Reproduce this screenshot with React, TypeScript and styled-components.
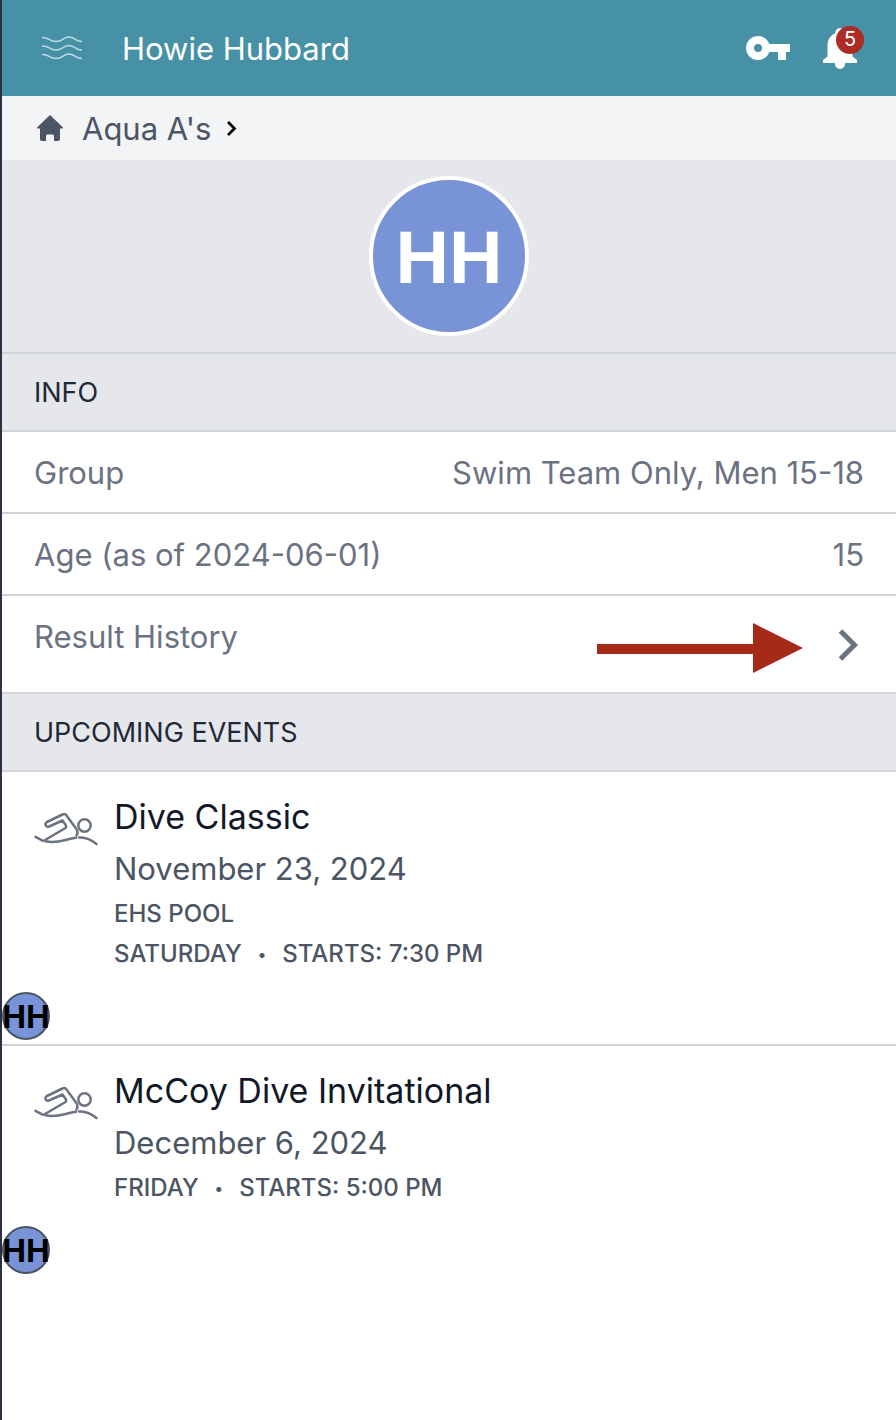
import React from "react";
import styled, { createGlobalStyle } from "styled-components";

const GlobalStyle = createGlobalStyle`
  *, *::before, *::after { box-sizing: border-box; }
  html, body { height: 100%; }
  body { margin: 0; background: #fff; font-family: Inter, "Liberation Sans", sans-serif; }
  h1, h2, h3, p, ul, dl, dt, dd, ol { margin: 0; padding: 0; font-weight: 400; }
  ul, ol { list-style: none; }
  a { color: inherit; text-decoration: none; }
  button { padding: 0; border: 0; background: none; color: inherit; font: inherit; cursor: pointer; }
  svg { display: block; flex: none; }
`;

const Page = styled.div`
  min-height: 100vh;
  border-left: 2px solid #2b3142;
  background: #fff;
`;

const TopBar = styled.header`
  display: flex;
  align-items: center;
  height: 96px;
  padding: 0 32px;
  background: #4691a6;
  color: #fff;
`;

const MenuButton = styled.button`
  padding-left: 7px;
`;

const PageTitle = styled.h1`
  flex: 1;
  padding: 2px 0 0 39px;
  font-size: 31px;
  line-height: 48px;
`;

const TopActions = styled.div`
  display: flex;
  align-items: center;
  gap: 24px;
`;

const IconButton = styled.button`
  position: relative;
  width: 48px;
  height: 48px;
`;

const Badge = styled.span`
  position: absolute;
  top: 2px;
  right: 0;
  width: 28px;
  height: 28px;
  border-radius: 50%;
  background: #ab2d26;
  font-size: 20px;
  line-height: 26px;
  text-align: center;
`;

const Breadcrumb = styled.nav`
  display: flex;
  align-items: center;
  height: 64px;
  padding: 0 32px;
  background: #f3f4f6;
  color: #4b5563;
  font-size: 31px;
  line-height: 48px;
`;

const CrumbLink = styled.a`
  display: flex;
  align-items: center;
  gap: 16px;
  margin-right: 12px;
`;

const CrumbLabel = styled.span`
  padding-top: 2px;
`;

const Hero = styled.div`
  display: flex;
  justify-content: center;
  padding: 16px;
  background: #e5e7eb;
`;

const Avatar = styled.span<{ $small?: boolean }>`
  display: flex;
  align-items: center;
  justify-content: center;
  width: ${(p) => (p.$small ? 48 : 160)}px;
  height: ${(p) => (p.$small ? 48 : 160)}px;
  padding-top: ${(p) => (p.$small ? 0 : 3)}px;
  border: ${(p) => (p.$small ? "2px solid #4b5563" : "4px solid #fff")};
  border-radius: 50%;
  background: #7893d6;
  color: ${(p) => (p.$small ? "#000" : "#fff")};
  font-family: "Liberation Sans", Arial, sans-serif;
  font-weight: 700;
  font-size: ${(p) => (p.$small ? 33 : 74)}px;
  line-height: 1;
`;

const SectionTitle = styled.h2`
  padding: 17px 32px 15px;
  border: solid #d1d5db;
  border-width: 2px 0;
  background: #e5e7eb;
  color: #1f2937;
  font-size: 27px;
  line-height: 44px;
  text-transform: uppercase;
`;

const InfoRow = styled.div`
  display: flex;
  justify-content: space-between;
  padding: 17px 32px 15px;
  color: #6b7280;
  font-size: 31px;
  line-height: 48px;

  & + & { border-top: 2px solid #d1d5db; }
`;

const HistoryLink = styled.a`
  display: flex;
  justify-content: space-between;
  padding: 17px 32px 15px;
  border-top: 2px solid #d1d5db;
  color: #6b7280;
  font-size: 31px;
  line-height: 48px;
`;

const HistoryMarks = styled.span`
  display: flex;
  align-items: center;
  gap: 28px;
  height: 64px;
`;

const EventItem = styled.li`
  padding-bottom: 4px;

  & + & { border-top: 2px solid #d1d5db; }
`;

const EventLink = styled.a`
  display: flex;
  gap: 16px;
  padding: 20px 32px 18px;
`;

const EventTitle = styled.h3`
  margin-bottom: 2px;
  color: #111827;
  font-size: 34px;
  line-height: 50px;
`;

const EventDate = styled.p`
  color: #4b5563;
  font-size: 31px;
  line-height: 50px;
`;

const EventMeta = styled.p`
  display: flex;
  gap: 16px;
  color: #4b5563;
  font-size: 24px;
  line-height: 40px;
  font-weight: 500;
  text-transform: uppercase;
`;

const Dot = styled.span`
  font-size: 16px;
`;

const WavesIcon = () => (
  <svg width="42" height="26" viewBox="0 0 42 26" fill="none" stroke="#b9dde4" strokeWidth="1.4">
    {[2, 10.5, 19].map((y) => (
      <path key={y} d={`M1 ${y + 0.5}C8 ${y} 8 ${y + 4.5} 15 ${y + 4.5}S22 ${y} 28 ${y}S34 ${y + 4.5} 41 ${y + 4.5}`} />
    ))}
  </svg>
);

const KeyIcon = () => (
  <svg width="48" height="48" viewBox="0 0 24 24" fill="currentColor">
    <path d="M12.65 10A6 6 0 1 0 12.65 14H17v4h4v-4h2v-4zM7 14a2 2 0 1 1 0-4 2 2 0 0 1 0 4z" />
  </svg>
);

const BellIcon = () => (
  <svg width="48" height="48" viewBox="0 0 48 48" fill="currentColor">
    <path d="M24 4a5 5 0 0 0-4.800 5.200C14.500 11.200 11.500 15.800 11.500 21v11.500L7 36v3h12v1a5 5 0 0 0 10 0v-1h12v-3l-4.500-3.500V21c0-5.200-3-9.800-7.700-11.800A5 5 0 0 0 24 4z" />
  </svg>
);

const HomeIcon = () => (
  <svg width="32" height="32" viewBox="0 0 32 32" fill="currentColor">
    <path d="M16 3L29 15.500v1h-3v10.500a2 2 0 0 1-2 2h-4v-5a1.500 1.500 0 0 0-1.500-1.500h-5a1.500 1.500 0 0 0-1.500 1.500v5H8a2 2 0 0 1-2-2V16.500H3v-1z" />
  </svg>
);

const CrumbChevron = () => (
  <svg width="16" height="20" viewBox="0 0 16 20" fill="none" stroke="#000" strokeWidth="2.700">
    <path d="M5 4l6.500 6.500L5 17" />
  </svg>
);

const RowChevron = () => (
  <svg width="32" height="40" viewBox="0 0 32 40" fill="none" stroke="currentColor" strokeWidth="5">
    <path d="M8.500 6l14 14L8.500 34" />
  </svg>
);

const ArrowMark = () => (
  <svg width="207" height="56" viewBox="0 0 207 56" fill="#a52a17">
    <path d="M0 27h156V6l50 25-50 25V37H0z" />
  </svg>
);

const SwimmerIcon = () => (
  <svg width="64" height="72" viewBox="0 0 64 72" fill="none" stroke="#6b7280" strokeWidth="2.500" strokeLinejoin="round" strokeLinecap="round">
    <path d="M1.500 44.800L9 48.800" />
    <path d="M11.500 49.300C24 52 31 47 42 45.800" />
    <path d="M45 45.500C52 44.800 57 47.500 62.500 52" />
    <path d="M11 48L31.500 36C32.500 35 32.500 34.500 32 33.500L28.500 28.500L15 34.500C12 35.500 10 32 13 30L28.500 22.500C30.500 21.500 31.500 22 32.500 23.500L42 36.500C44 39 44 41 42.500 43.500" />
    <circle cx="50.500" cy="33.500" r="6.200" />
  </svg>
);

type MeetEvent = { title: string; date: string; place?: string; day: string; starts: string };

const events: MeetEvent[] = [
  { title: "Dive Classic", date: "November 23, 2024", place: "EHS Pool", day: "Saturday", starts: "7:30 PM" },
  { title: "McCoy Dive Invitational", date: "December 6, 2024", day: "Friday", starts: "5:00 PM" },
];

export default function App() {
  return (
    <>
      <GlobalStyle />
      <Page>
        <TopBar>
          <MenuButton aria-label="Menu"><WavesIcon /></MenuButton>
          <PageTitle>Howie Hubbard</PageTitle>
          <TopActions>
            <IconButton aria-label="Account access"><KeyIcon /></IconButton>
            <IconButton aria-label="Notifications">
              <BellIcon />
              <Badge>5</Badge>
            </IconButton>
          </TopActions>
        </TopBar>
        <Breadcrumb aria-label="Breadcrumb">
          <CrumbLink href="#team"><HomeIcon /><CrumbLabel>Aqua A's</CrumbLabel></CrumbLink>
          <CrumbChevron />
        </Breadcrumb>
        <main>
          <Hero><Avatar>HH</Avatar></Hero>
          <section>
            <SectionTitle>Info</SectionTitle>
            <dl>
              <InfoRow><dt>Group</dt><dd>Swim Team Only, Men 15-18</dd></InfoRow>
              <InfoRow><dt>Age (as of 2024-06-01)</dt><dd>15</dd></InfoRow>
            </dl>
            <HistoryLink href="#results">
              Result History
              <HistoryMarks><ArrowMark /><RowChevron /></HistoryMarks>
            </HistoryLink>
          </section>
          <section>
            <SectionTitle>Upcoming Events</SectionTitle>
            <ul>
              {events.map((event) => (
                <EventItem key={event.title}>
                  <EventLink href="#event">
                    <SwimmerIcon />
                    <div>
                      <EventTitle>{event.title}</EventTitle>
                      <EventDate>{event.date}</EventDate>
                      {event.place && <EventMeta>{event.place}</EventMeta>}
                      <EventMeta>
                        <span>{event.day}</span>
                        <Dot>•</Dot>
                        <span>Starts: {event.starts}</span>
                      </EventMeta>
                    </div>
                  </EventLink>
                  <Avatar $small>HH</Avatar>
                </EventItem>
              ))}
            </ul>
          </section>
        </main>
      </Page>
    </>
  );
}
